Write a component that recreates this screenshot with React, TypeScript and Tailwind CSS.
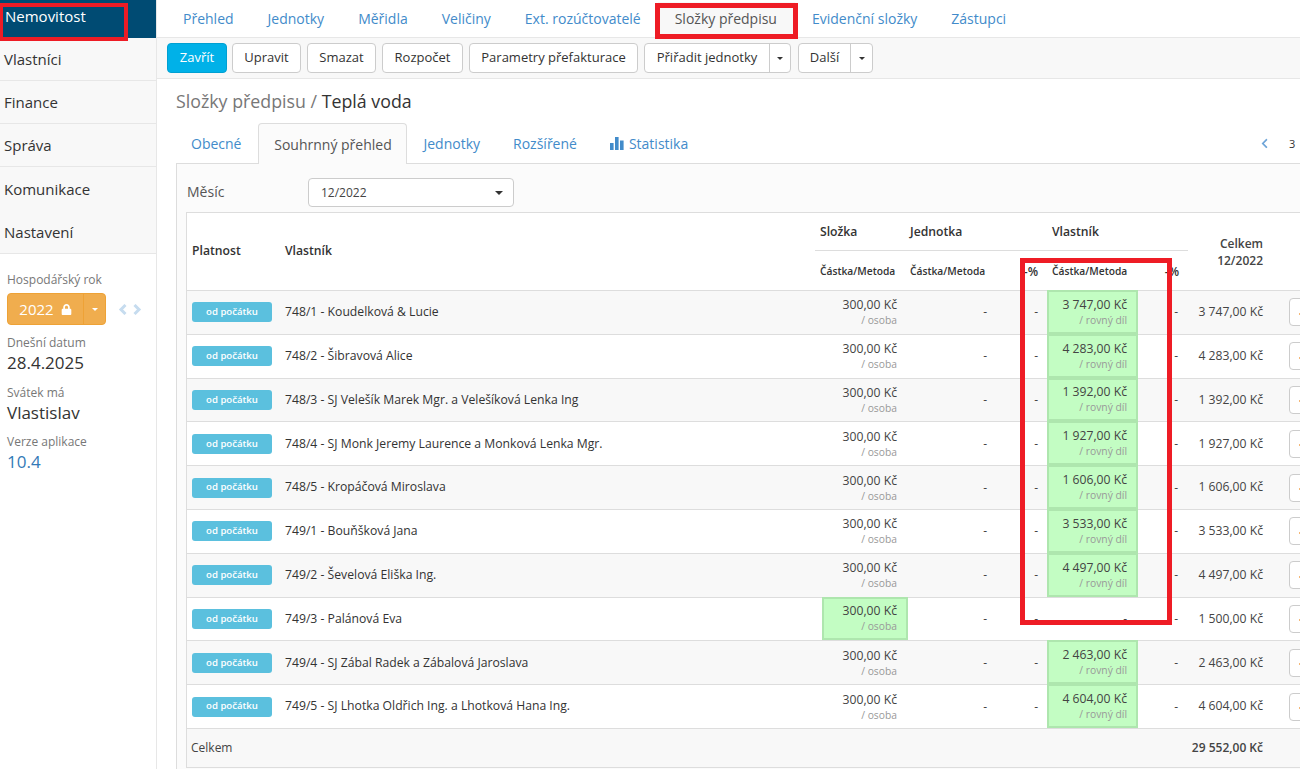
import { FaChevronLeft, FaLock } from 'react-icons/fa';

const topTabs = ['Přehled', 'Jednotky', 'Měřidla', 'Veličiny', 'Ext. rozúčtovatelé', 'Složky předpisu', 'Evidenční složky', 'Zástupci'];
const navItems = [
  { label: 'Vlastníci', className: 'h-[43px] pt-[11px] border-b border-[#e7e7e7]' },
  { label: 'Finance', className: 'h-[43px] pt-[11px] border-b border-[#e7e7e7]' },
  { label: 'Správa', className: 'h-[43px] pt-[11px] border-b border-[#e7e7e7]' },
  { label: 'Komunikace', className: 'h-[44px] pt-[12px]' },
  { label: 'Nastavení', className: 'h-[43px] pt-[11px]' },
];
const plainButtons = [
  { label: 'Upravit', width: 'w-[69px]' },
  { label: 'Smazat', width: 'w-[69px]' },
  { label: 'Rozpočet', width: 'w-[81px]' },
  { label: 'Parametry přefakturace', width: 'w-[169px]' },
];

type Row = { name: string; owner: string; total: string; highlightItem?: boolean };

const rows: Row[] = [
  { name: '748/1 - Koudelková & Lucie', owner: '3 747,00 Kč', total: '3 747,00 Kč' },
  { name: '748/2 - Šibravová Alice', owner: '4 283,00 Kč', total: '4 283,00 Kč' },
  { name: '748/3 - SJ Velešík Marek Mgr. a Velešíková Lenka Ing', owner: '1 392,00 Kč', total: '1 392,00 Kč' },
  { name: '748/4 - SJ Monk Jeremy Laurence a Monková Lenka Mgr.', owner: '1 927,00 Kč', total: '1 927,00 Kč' },
  { name: '748/5 - Kropáčová Miroslava', owner: '1 606,00 Kč', total: '1 606,00 Kč' },
  { name: '749/1 - Bouňšková Jana', owner: '3 533,00 Kč', total: '3 533,00 Kč' },
  { name: '749/2 - Ševelová Eliška Ing.', owner: '4 497,00 Kč', total: '4 497,00 Kč' },
  { name: '749/3 - Palánová Eva', owner: '', total: '1 500,00 Kč', highlightItem: true },
  { name: '749/4 - SJ Zábal Radek a Zábalová Jaroslava', owner: '2 463,00 Kč', total: '2 463,00 Kč' },
  { name: '749/5 - SJ Lhotka Oldřich Ing. a Lhotková Hana Ing.', owner: '4 604,00 Kč', total: '4 604,00 Kč' },
];

const gridCols = 'grid-cols-[93px_535px_93px_87px_52px_91px_50px_82px_200px]';

function Caret({ className = 'border-x-[3px] border-t-[3px] border-t-[#333]' }: { className?: string }) {
  return <span className={`inline-block h-0 w-0 border-x-transparent ${className}`} />;
}

function Amount({ value, method }: { value: string; method: string }) {
  return (
    <div className="text-right">
      <div className="text-[12.2px] leading-[17px] text-[#444]">{value}</div>
      <div className="text-[10.3px] leading-[15px] text-[#999]">{method}</div>
    </div>
  );
}

function Sidebar() {
  const label = 'text-[12px] leading-[18px] text-[#777]';
  const value = 'text-[17px] leading-[21px]';
  return (
    <aside className="w-[157px] shrink-0 border-r border-[#e7e7e7] bg-white">
      <div className="h-[38px] bg-[#004b73] pl-[5px] pt-[6px] text-[15px] leading-[20px] text-white">Nemovitost</div>
      <nav className="h-[216px] border-b border-[#e7e7e7] bg-[#f8f8f8]">
        {navItems.map((item) => (
          <div key={item.label} className={`pl-[4px] text-[15px] leading-[20px] text-[#333] ${item.className}`}>
            {item.label}
          </div>
        ))}
      </nav>
      <div className="px-[7px] pt-[17px]">
        <div className={label}>Hospodářský rok</div>
        <div className="mt-[4px] flex items-center">
          <div className="flex h-[32px] w-[99px] rounded-[4px] border border-[#eea236] bg-[#f0ad4e] text-white">
            <div className="flex w-[75px] items-center justify-center gap-[7px] text-[15px]">
              2022 <FaLock className="h-[11px] w-[11px]" />
            </div>
            <div className="flex flex-1 items-center justify-center border-l border-[#eea236]">
              <Caret className="border-x-[3px] border-t-[3px] border-t-white" />
            </div>
          </div>
          <div className="ml-[12px] flex gap-[6px] text-[#c6dcef]">
            <svg viewBox="0 0 9 11" className="h-[11px] w-[9px]" fill="none" stroke="currentColor" strokeWidth="3">
              <path d="M7.5 1 3 5.5 7.5 10" />
            </svg>
            <svg viewBox="0 0 9 11" className="h-[11px] w-[9px]" fill="none" stroke="currentColor" strokeWidth="3">
              <path d="M1.5 1 6 5.5 1.5 10" />
            </svg>
          </div>
        </div>
        <div className={`mt-[9px] ${label}`}>Dnešní datum</div>
        <div className={`${value} text-[#333]`}>28.4.2025</div>
        <div className={`mt-[11px] ${label}`}>Svátek má</div>
        <div className={`${value} text-[#333]`}>Vlastislav</div>
        <div className={`mt-[10px] ${label}`}>Verze aplikace</div>
        <div className={`${value} text-[#337ab7]`}>10.4</div>
      </div>
    </aside>
  );
}

function Toolbar() {
  const btn = 'flex h-[30px] items-center justify-center rounded-[4px] border border-[#ccc] bg-white text-[13px] text-[#333]';
  return (
    <div className="flex h-[42px] items-center gap-[6px] border-y border-[#e7e7e7] bg-[#f8f8f8] pl-[10px]">
      <div className="-mr-px flex h-[30px] w-[60px] items-center justify-center rounded-[4px] border border-[#00a0d2] bg-[#00b1e8] text-[13px] text-white">Zavřít</div>
      {plainButtons.map((b) => (
        <div key={b.label} className={`${btn} ${b.width}`}>{b.label}</div>
      ))}
      <div className={`${btn} w-[147px]`}>
        <span className="flex-1 text-center">Přiřadit jednotky</span>
        <span className="flex h-full w-[21px] items-center justify-center border-l border-[#ccc]"><Caret /></span>
      </div>
      <div className={`${btn} ml-[1px] w-[75px]`}>
        <span className="flex-1 text-center">Další</span>
        <span className="flex h-full w-[22px] items-center justify-center border-l border-[#ccc]"><Caret /></span>
      </div>
    </div>
  );
}

function TableHeader() {
  const head = 'text-[12.2px] font-semibold text-[#333]';
  const group = `flex h-[38px] items-end pb-[9px] pl-[5px] border-b border-[#ddd] ${head}`;
  const sub = 'flex h-[39px] items-center pl-[5px] pt-[2px] text-[10.25px] font-semibold text-[#333]';
  const percent = 'flex h-[39px] items-center justify-end pr-[9px] pt-[2px] text-[12px] font-semibold text-[#333]';
  return (
    <div className={`grid h-[77px] ${gridCols} bg-white`}>
      <div className={`row-span-2 flex items-center pl-[5px] ${head}`}>Platnost</div>
      <div className={`row-span-2 flex items-center pl-[5px] ${head}`}>Vlastník</div>
      <div className={group}>Složka</div>
      <div className={`${group} !pl-[2px]`}>Jednotka</div>
      <div className="border-b border-[#ddd]" />
      <div className={group}>Vlastník</div>
      <div className="border-b border-[#ddd]" />
      <div className="row-span-2 flex flex-col items-end justify-center pr-[7px] text-right text-[12px] font-semibold leading-[17px] text-[#444]">
        <span>Celkem</span>
        <span>12/2022</span>
      </div>
      <div className="row-span-2" />
      <div className={sub}>Částka/Metoda</div>
      <div className={`${sub} !pl-[2px]`}>Částka/Metoda</div>
      <div className={percent}>-%</div>
      <div className={sub}>Částka/Metoda</div>
      <div className={percent}>-%</div>
    </div>
  );
}

function TableRow({ row, index }: { row: Row; index: number }) {
  const dash = 'flex items-center justify-end text-[12px] text-[#444]';
  const green = 'border-2 border-[#aee6ae] bg-[#c3fdc3]';
  return (
    <div className={`grid h-[43.8px] ${gridCols} border-t border-[#ddd] ${index % 2 === 0 ? 'bg-[#f8f8f8]' : 'bg-white'}`}>
      <div className="flex items-center pl-[5px]">
        <span className="flex h-[20px] w-[80px] items-center justify-center rounded-[3px] bg-[#5bc0de] text-[9.6px] font-semibold text-white">od počátku</span>
      </div>
      <div className="flex items-center pl-[5px] text-[12.2px] text-[#333]">{row.name}</div>
      {row.highlightItem ? (
        <div className={`ml-[7px] -mt-px flex items-center justify-end pr-[9px] ${green}`}>
          <Amount value="300,00 Kč" method="/ osoba" />
        </div>
      ) : (
        <div className="flex items-center justify-end pr-[11px]">
          <Amount value="300,00 Kč" method="/ osoba" />
        </div>
      )}
      <div className={`${dash} pr-[8px]`}>-</div>
      <div className={`${dash} pr-[9px]`}>-</div>
      {row.owner ? (
        <div className={`-mt-px flex items-center justify-end pr-[9px] ${green}`}>
          <Amount value={row.owner} method="/ rovný díl" />
        </div>
      ) : (
        <div className={`${dash} pr-[11px]`}>-</div>
      )}
      <div className={`${dash} pr-[10px]`}>-</div>
      <div className="flex items-center justify-end pr-[7px] text-[12.2px] text-[#444]">{row.total}</div>
      <div className="flex items-center pl-[19px]">
        <span className="flex h-[28px] w-[40px] items-center rounded-[4px] border border-[#ccc] bg-white pl-[9px]">
          <span className="mt-[3px] h-[2px] w-[2px] bg-[#f5b878]" />
        </span>
      </div>
    </div>
  );
}

export default function App() {
  return (
    <div className="relative flex h-[769px] w-[1300px] overflow-hidden bg-white font-['Open_Sans',sans-serif]">
      <Sidebar />
      <main className="min-w-0 flex-1">
        <div className="flex h-[37px] pl-[9px] pt-[2px]">
          {topTabs.map((t) => (
            <div
              key={t}
              className={`pl-[17px] pt-[7px] text-[14px] leading-[20px] ${t === 'Složky předpisu' ? 'bg-[#f8f8f8] pr-[18px] text-[#555]' : 'pr-[17px] text-[#428bca]'}`}
            >
              {t}
            </div>
          ))}
        </div>
        <Toolbar />
        <div className="pl-[19px]">
          <h1 className="pt-[10px] text-[17.8px] font-normal leading-[24px] text-[#777]">
            Složky předpisu / <span className="text-[#333]">Teplá voda</span>
          </h1>
          <div className="relative mt-[10px] flex h-[41px] items-end border-b border-[#ddd]">
            <div className="flex h-[40px] items-center pl-[15px] pr-[17px] text-[14px] text-[#428bca]">Obecné</div>
            <div className="-mb-px flex h-[41px] w-[149px] items-center justify-center rounded-t-[4px] border border-b-0 border-[#ddd] bg-[#fbfbfb] text-[14px] text-[#555]">Souhrnný přehled</div>
            <div className="flex h-[40px] items-center pl-[16px] pr-[17px] text-[14px] text-[#428bca]">Jednotky</div>
            <div className="flex h-[40px] items-center px-[16px] text-[14px] text-[#428bca]">Rozšířené</div>
            <div className="flex h-[40px] items-center gap-[5px] pl-[17px] pr-[16px] text-[14px] text-[#428bca]">
              <svg viewBox="0 0 14 13" className="h-[13px] w-[14px]" fill="currentColor">
                <rect x="0" y="6" width="3.6" height="7" />
                <rect x="5" y="0" width="3.6" height="13" />
                <rect x="10" y="3.5" width="3.6" height="9.5" />
              </svg>
              Statistika
            </div>
            <div className="absolute bottom-[11px] left-[1084px] flex items-center gap-[20px] text-[11px]">
              <FaChevronLeft className="h-[11px] w-[9px] text-[#6fa5d8]" />
              <span className="text-[#333]">3</span>
            </div>
          </div>
          <div className="h-[700px] border-l border-[#ddd] bg-[#fbfbfb] pl-[10px]">
            <div className="flex h-[48px] items-start pt-[14px]">
              <label className="w-[121px] pt-[4px] text-[14px] leading-[20px] text-[#555]">Měsíc</label>
              <div className="flex h-[29px] w-[206px] items-center justify-between rounded-[4px] border border-[#ccc] bg-white pl-[12px] pr-[10px] text-[12px] text-[#444]">
                12/2022 <Caret className="border-x-[4px] border-t-[4px] border-t-[#333]" />
              </div>
            </div>
            <div className="-ml-px w-[1200px] border-y border-l border-[#ddd]">
              <TableHeader />
              {rows.map((row, i) => (
                <TableRow key={row.name} row={row} index={i} />
              ))}
              <div className={`grid h-[39px] ${gridCols} border-t border-[#ddd] bg-[#f8f8f8]`}>
                <div className="flex items-center pl-[4px] text-[12px] text-[#444]">Celkem</div>
                <div className="col-start-8 flex items-center justify-end pr-[7px] text-[12px] font-semibold text-[#444]">29 552,00 Kč</div>
              </div>
            </div>
          </div>
        </div>
      </main>
      <div className="pointer-events-none absolute left-0 top-[3px] h-[38px] w-[128px] border-[4px] border-l-[3px] border-[#ee1c25]" />
      <div className="pointer-events-none absolute left-[655px] top-[3px] h-[36px] w-[143px] border-[5px] border-[#ee1c25]" />
      <div className="pointer-events-none absolute left-[1020px] top-[258px] h-[367px] w-[152px] border-[5px] border-[#ee1c25]" />
    </div>
  );
}
